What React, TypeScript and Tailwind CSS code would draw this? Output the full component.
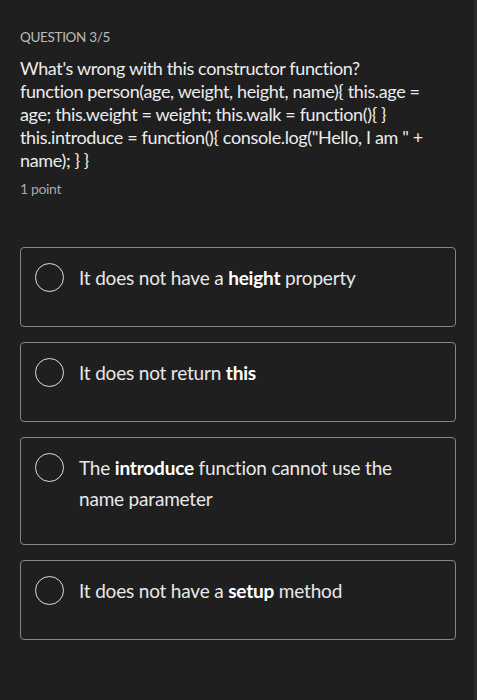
import React from "react";

const options: { label: React.ReactNode; pb: string }[] = [
  { label: <>It does not have a <b className="font-bold text-white">height</b> property</>, pb: "pb-[33px]" },
  { label: <>It does not return <b className="font-bold text-white">this</b></>, pb: "pb-[33px]" },
  {
    label: <>The <b className="font-bold text-white">introduce</b> function cannot use the<br />name parameter</>,
    pb: "pb-[30px]",
  },
  { label: <>It does not have a <b className="font-bold text-white">setup</b> method</>, pb: "pb-[33px]" },
];

export default function App() {
  return (
    <div className="flex w-[477px] h-[700px] bg-[#1f1f1f]" style={{ fontFamily: "Lato, 'Noto Sans', sans-serif" }}>
      <div className="flex-1 pl-5 pr-[18px] pt-[28px]">
        <div className="text-[13.5px] leading-[18px] text-[#bcbcbc] tracking-tight">QUESTION 3/5</div>
        <div className="mt-[11px] text-[18px] leading-[23px] text-[#ececec] tracking-[-0.02em]">
          What's wrong with this constructor function?
          <br />
          function person(age, weight, height, name){"{"} this.age =
          <br />
          age; this.weight = weight; this.walk = function(){"{"} {"}"}
          <br />
          this.introduce = function(){"{"} console.log("Hello, I am " +
          <br />
          name); {"}"} {"}"}
        </div>
        <div className="mt-[8px] text-[14px] leading-[18px] text-[#a8a8a8] tracking-tight">1 point</div>

        <div className="mt-[49px] flex flex-col gap-[15px]">
          {options.map((o, i) => (
            <div key={i} className={`flex items-start gap-[15px] border-[1.5px] border-[#858585] rounded-[4px] pl-[14px] pr-4 pt-[14px] ${o.pb}`}>
              <div className="mt-[1px] w-[29px] h-[29px] shrink-0 rounded-full border-[1.5px] border-[#dedede]" />
              <div className="text-[19px] leading-[31px] text-[#e8e8e8] tracking-[-0.01em]">{o.label}</div>
            </div>
          ))}
        </div>
      </div>
      <div className="w-[3px] bg-[#2a2a2a]" />
    </div>
  );
}
